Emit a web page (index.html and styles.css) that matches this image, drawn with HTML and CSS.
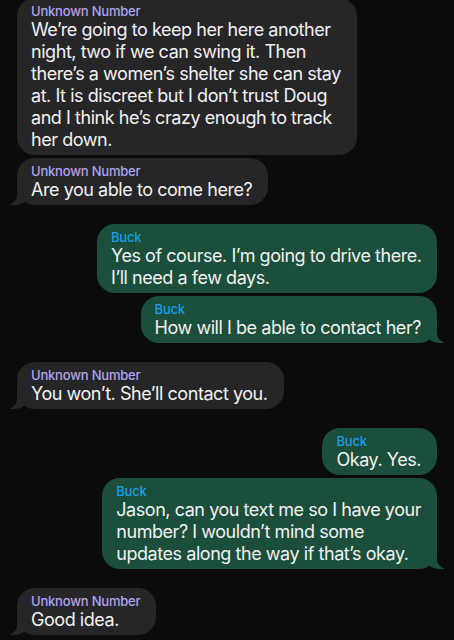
FILE: index.html
```html
<!DOCTYPE html>
<html lang="en">

<head>
  <meta charset="UTF-8">
  <meta name="viewport" content="width=device-width, initial-scale=1.0">
  <title>Messages</title>
  <link rel="stylesheet" href="styles.css">
</head>

<body>

  <div class="thread">

    <!-- Unknown Number -->
    <div class="bubble them wide">
      <div class="name">Unknown Number</div>
      <p>We’re going to keep her here another<br>night, two if we can swing it. Then<br>there’s a women’s shelter she can stay<br>at. It is discreet but I don’t trust Doug<br>and I think he’s crazy enough to track<br>her down.</p>
    </div>
    <div class="bubble them tail">
      <div class="name">Unknown Number</div>
      <p>Are you able to come here?</p>
    </div>

    <!-- Buck -->
    <div class="bubble me wide new-group">
      <div class="name">Buck</div>
      <p>Yes of course. I’m going to drive there.<br>I’ll need a few days.</p>
    </div>
    <div class="bubble me tail">
      <div class="name">Buck</div>
      <p>How will I be able to contact her?</p>
    </div>

    <div class="bubble them tail new-group">
      <div class="name">Unknown Number</div>
      <p>You won’t. She’ll contact you.</p>
    </div>

    <div class="bubble me new-group">
      <div class="name">Buck</div>
      <p>Okay. Yes.</p>
    </div>
    <div class="bubble me tail">
      <div class="name">Buck</div>
      <p>Jason, can you text me so I have your<br>number? I wouldn’t mind some<br>updates along the way if that’s okay.</p>
    </div>

    <div class="bubble them tail new-group">
      <div class="name">Unknown Number</div>
      <p>Good idea.</p>
    </div>

  </div>

</body>

</html>
```

FILE: styles.css
```css
body {
  background-color: #0b0b0b;
  color: #f2f2f2;
  margin: 0;
  padding: 0;
  font-family: Inter, "Noto Sans", sans-serif;
  overflow: hidden;
}

.thread {
  display: flex;
  flex-direction: column;
  gap: 3px;
  padding: 0 17px;
  margin-top: -2px;
}

.bubble {
  position: relative;
  box-sizing: border-box;
  max-width: 340px;
  padding: 6px 16px 4px 14px;
  border-radius: 18px;
}

.bubble.wide {
  width: 340px;
}

.bubble p {
  margin: 0;
  font-size: 18px;
  line-height: 22px;
  letter-spacing: -0.45px;
  white-space: nowrap;
}

.name {
  font-size: 13px;
  line-height: 15px;
  font-weight: 500;
  letter-spacing: -0.2px;
}

.new-group {
  margin-top: 16px;
}

/* received */
.them {
  align-self: flex-start;
  background-color: #262628;
}

.them .name {
  color: #b3a3ea;
}

/* sent */
.me {
  align-self: flex-end;
  background-color: #1b4e3b;
}

.me .name {
  color: #1c9fe8;
}

/* tails */
.tail::before,
.tail::after {
  content: "";
  position: absolute;
  bottom: 0;
  height: 20px;
}

.them.tail::before {
  left: -7px;
  width: 20px;
  background-color: #262628;
  border-bottom-right-radius: 16px 14px;
}

.them.tail::after {
  left: -26px;
  width: 26px;
  background-color: #0b0b0b;
  border-bottom-right-radius: 10px;
}

.me.tail::before {
  right: -7px;
  width: 20px;
  background-color: #1b4e3b;
  border-bottom-left-radius: 16px 14px;
}

.me.tail::after {
  right: -26px;
  width: 26px;
  background-color: #0b0b0b;
  border-bottom-left-radius: 10px;
}
```
